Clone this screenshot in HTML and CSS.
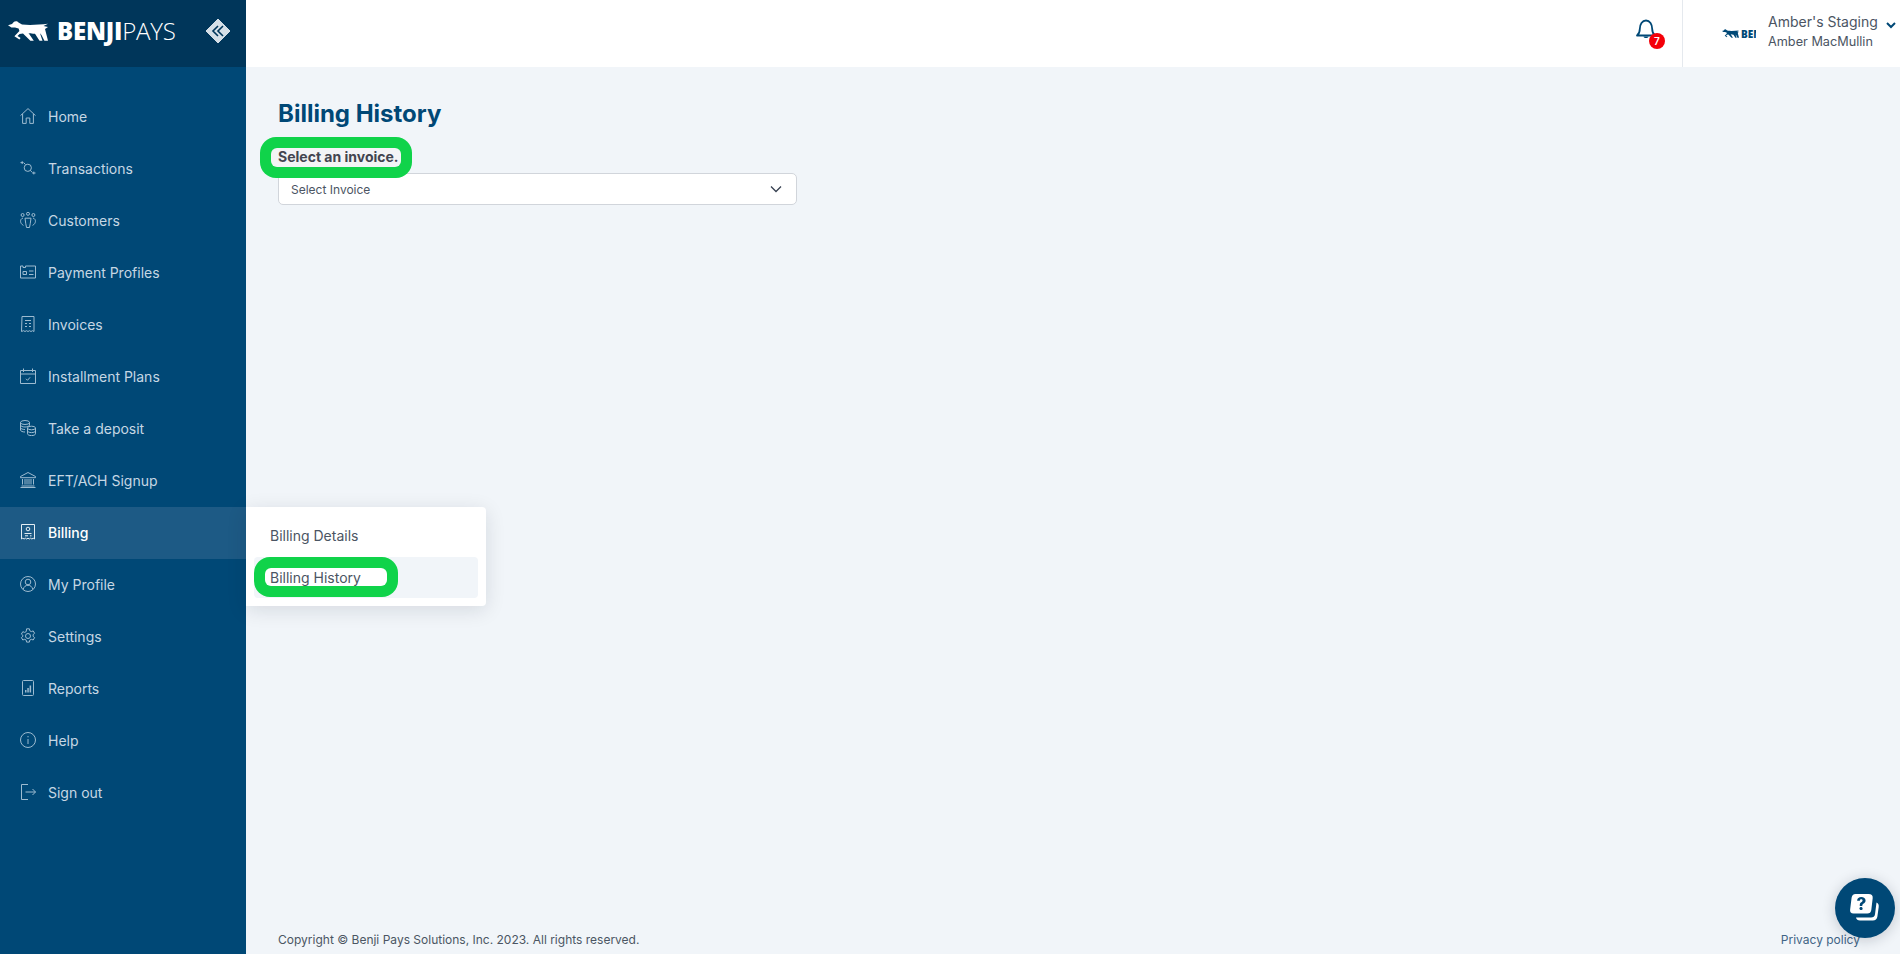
FILE: index.html
```html
<!DOCTYPE html>
<html lang="en">
<head>
    <meta charset="UTF-8">
    <meta name="viewport" content="width=device-width, initial-scale=1.0">
    <title>Billing History</title>
    <link rel="stylesheet" href="styles.css">
</head>
<body>
    <svg class="defs" width="0" height="0">
        <symbol id="dog" viewBox="0 0 40 20">
            <path d="M0 4.200 L4 3 L6 .8 C7.500 -.3 9.500 0 10.500 1.600 L14 3.600 C22 4.400 31 3.800 40 2.800 L35.500 5 L40 6 L37 8 L40 19.800 L36.400 19.800 L33.500 14 L32 12.200 L34.500 19.800 L31.500 19.800 L27 12.800 C24.500 12.800 22.500 12.600 20.500 12 L25.800 19.800 L22.400 19.800 L15 12.600 L11.600 13 L9.500 15 L12.600 17 L11.400 18.600 L6.400 15.200 L11.400 10 L10.600 7.600 L7 6.600 L3.400 6.400 Z"/>
        </symbol>
    </svg>

    <div class="app">
        <aside class="sidebar">
            <div class="brand">
                <svg class="brand-dog"><use href="#dog"/></svg>
                <span class="brand-name"><b>BENJI</b>PAYS</span>
                <svg class="collapse" width="24" height="24" viewBox="0 0 24 24">
                    <path d="M12 0 L24 12 L12 24 L0 12 Z" fill="#d5dfe7" stroke="#d5dfe7" stroke-width="1" stroke-linejoin="round"/>
                    <path d="M12 7 L7 12 L12 17 M17 7 L12 12 L17 17" fill="none" stroke="#00365a" stroke-width="1.600"/>
                </svg>
            </div>
            <nav class="nav">
                <a class="nav-item">
                    <svg class="nav-icon" viewBox="0 0 16 16"><path d="M.5 7.600 8 .6l7.500 7M2.600 6v9.400h3.600V10h3.600v5.400h3.600V6"/></svg>
                    <span>Home</span>
                </a>
                <a class="nav-item">
                    <svg class="nav-icon" viewBox="0 0 16 16"><circle cx="7.800" cy="7.800" r="3.600"/><path d="M3.500 2.600H.5M2.200 1.200v2.800M5.400 4.400 3.800 2.800M10.400 10.400l1.800 2M15.500 13h-3.300M13.800 11.600v2.800"/></svg>
                    <span>Transactions</span>
                </a>
                <a class="nav-item">
                    <svg class="nav-icon" viewBox="0 0 16 16"><circle cx="8" cy="1.800" r="1.500"/><circle cx="2.600" cy="3" r="1.500"/><circle cx="13.400" cy="3" r="1.500"/><path d="M5 6.200h6l-.7 5-.8 4.300h-3l-.8-4.300zM3 6C-.4 7-.2 11.500 3.400 13.400M13 6c3.400 1 3.200 5.500-.4 7.400"/></svg>
                    <span>Customers</span>
                </a>
                <a class="nav-item">
                    <svg class="nav-icon" viewBox="0 0 16 16"><path d="M.5 2v12h15V2h-10v1.500H3V2zM3 7.500h3.500v3H3zM9 7h4.500M9 10.500h4.500"/></svg>
                    <span>Payment Profiles</span>
                </a>
                <a class="nav-item">
                    <svg class="nav-icon" viewBox="0 0 16 16"><path d="M2 .5h12v15l-1.500-.8-1.500.8-1.500-.8-1.500.8-1.500-.8-1.500.8-1.500-.8-2 .8zM5 4.500h6M5 7.500h2M9 7.500h2M5 10.500h2M9 10.500h2"/></svg>
                    <span>Invoices</span>
                </a>
                <a class="nav-item">
                    <svg class="nav-icon" viewBox="0 0 16 16"><path d="M.5 2.500h15v13H.5zM.5 6h15M3.500.5v3.500M12.500.5v3.500M6 10.800l1.500 1.500 2.600-3"/></svg>
                    <span>Installment Plans</span>
                </a>
                <a class="nav-item">
                    <svg class="nav-icon" viewBox="0 0 16 16"><ellipse cx="5" cy="2.500" rx="4.500" ry="2"/><path d="M.5 2.500V10c0 1.200 2 2 4.500 2M.5 5c0 1.200 2 2 4.500 2s4.500-.8 4.500-2V2.500M.5 7.500c0 1.200 2 2 4.500 2"/><ellipse cx="11.500" cy="8" rx="4" ry="1.800"/><path d="M7.500 8v5.800c0 1 1.800 1.800 4 1.800s4-.8 4-1.800V8M7.500 10.800c0 1 1.800 1.800 4 1.800s4-.8 4-1.800"/></svg>
                    <span>Take a deposit</span>
                </a>
                <a class="nav-item">
                    <svg class="nav-icon" viewBox="0 0 16 16"><path d="M8 .5.5 4.500v1.200h15V4.500zM1.500 14h13M.5 15.500h15M2.500 7v5.500M5 7v5.500M7 7v5.500M9 7v5.500M11 7v5.500M13.500 7v5.500"/></svg>
                    <span>EFT/ACH Signup</span>
                </a>
                <div class="nav-item nav-item-active">
                    <svg class="nav-icon" viewBox="0 0 16 16"><path d="M1.500.5h13v14.500l-1.300-.8-1.300.8-1.300-.8-1.300.8-1.300-.8-1.300.8-1.300-.8-1.300.8-1.300-.8-1.300.8z"/><circle cx="8" cy="5" r="1.800"/><path d="M4.500 9.500h7M5 11.800h3M10 11.800h1.500"/></svg>
                    <span>Billing</span>
                    <div class="flyout">
                        <a class="flyout-item"><span class="mark-text">Billing Details</span></a>
                        <a class="flyout-item flyout-item-active">
                            <span class="mark mark-flyout"></span>
                            <span class="mark-text">Billing History</span>
                        </a>
                    </div>
                </div>
                <a class="nav-item">
                    <svg class="nav-icon" viewBox="0 0 16 16"><circle cx="8" cy="8" r="7.500"/><circle cx="8" cy="6" r="2.800"/><path d="M3.200 13.500c.6-3 2.600-4.200 4.800-4.200s4.200 1.200 4.800 4.200"/></svg>
                    <span>My Profile</span>
                </a>
                <a class="nav-item">
                    <svg class="nav-icon" viewBox="0 0 16 16"><circle cx="8" cy="8" r="2.500"/><path d="M6.600.8h2.800l.4 2 1.500.8 1.900-.7 1.400 2.400-1.500 1.300v1.700l1.500 1.300-1.400 2.400-1.900-.7-1.500.8-.4 2H6.600l-.4-2-1.500-.8-1.900.7-1.400-2.400 1.500-1.300V7.400L1.400 6.100l1.400-2.400 1.900.7 1.500-.8z"/></svg>
                    <span>Settings</span>
                </a>
                <a class="nav-item">
                    <svg class="nav-icon" viewBox="0 0 16 16"><rect x="2.500" y=".5" width="11" height="15" rx="1"/><path class="nav-icon-solid" d="M5 10h1.500v2.500H5zM7.300 8h1.500v4.500H7.300zM9.600 5.500h1.500v7H9.600z"/></svg>
                    <span>Reports</span>
                </a>
                <a class="nav-item">
                    <svg class="nav-icon" viewBox="0 0 16 16"><circle cx="8" cy="8" r="7.500"/><path d="M8 7v5M8 4v1.300"/></svg>
                    <span>Help</span>
                </a>
                <a class="nav-item">
                    <svg class="nav-icon" viewBox="0 0 16 16"><path d="M8 .5H1.500v15H8M5.500 8h10M12.500 5l3 3-3 3"/></svg>
                    <span>Sign out</span>
                </a>
            </nav>
        </aside>

        <div class="main">
            <header class="topbar">
                <div class="bell">
                    <svg width="20" height="22" viewBox="0 0 20 22">
                        <path d="M1 16.500c2-1.500 2.800-3 2.800-6.500 0-4.500 2.400-8.500 6.200-8.500s6.200 4 6.200 8.500c0 3.500.8 5 2.800 6.500z" fill="none" stroke="#004876" stroke-width="1.800" stroke-linejoin="round"/>
                        <path d="M7.500 17.500h5c-.4 2-4.600 2-5 0z" fill="#004876"/>
                    </svg>
                    <span class="badge">7</span>
                </div>
                <div class="account">
                    <div class="account-logo">
                        <svg class="account-dog"><use href="#dog"/></svg>
                        <span class="account-logo-name">BEN</span>
                    </div>
                    <div class="account-names">
                        <div class="account-org">Amber's Staging</div>
                        <div class="account-user">Amber MacMullin</div>
                    </div>
                    <svg class="account-caret" width="10" height="7" viewBox="0 0 10 7"><path d="M1 1l4 4 4-4" fill="none" stroke="#004876" stroke-width="2"/></svg>
                </div>
            </header>

            <main class="content">
                <h1 class="page-title">Billing History</h1>
                <div class="field">
                    <label class="field-label">
                        <span class="mark mark-label"></span>
                        <span class="mark-text">Select an invoice.</span>
                    </label>
                    <div class="select">
                        <span>Select Invoice</span>
                        <svg width="12" height="8" viewBox="0 0 12 8"><path d="M1 1.500l5 5 5-5" fill="none" stroke="#374151" stroke-width="1.300"/></svg>
                    </div>
                </div>
            </main>

            <footer class="footer">
                <span>Copyright © Benji Pays Solutions, Inc. 2023. All rights reserved.</span>
                <a class="footer-link">Privacy policy</a>
            </footer>
        </div>
    </div>

    <button class="chat">
        <svg width="32" height="32" viewBox="0 0 32 32">
            <path d="M27.500 10.500c1.800 1 2.500 2.300 2.200 4.500l-1.300 9.500c-.4 2.800-2 4-4.500 4H11c-2.200 0-3.700-1-4-3h15c2.300 0 3.700-1 4-3.300z" fill="#fff"/>
            <path d="M6.500 2h13C22.500 2 24 3.500 23.700 6l-1.400 12c-.3 2.400-1.700 3.500-4 3.500H4.500C2 21.500.8 20 1.100 17.800l1.500-12C2.900 3.300 4.300 2 6.500 2z" fill="#fff"/>
            <text x="12.500" y="17.500" class="chat-mark">?</text>
        </svg>
    </button>
</body>
</html>
```

FILE: styles.css
```css
* {
    box-sizing: border-box;
}

body {
    margin: 0;
    height: 100vh;
    overflow: hidden;
    font-family: Inter, "Liberation Sans", sans-serif;
    background: #f1f5f9;
    color: #374151;
}

.defs {
    position: absolute;
}

.app {
    display: flex;
    height: 100%;
}

/* sidebar */
.sidebar {
    width: 246px;
    flex-shrink: 0;
    background: #004876;
    position: relative;
    z-index: 2;
}

.brand {
    height: 67px;
    display: flex;
    align-items: center;
    padding: 0 16px 5px 8px;
    background: #00365a;
    color: white;
}

.brand-dog {
    width: 40px;
    height: 20px;
    fill: white;
    margin-right: 9px;
}

.brand-name {
    font-family: "Open Sans", sans-serif;
    font-size: 24px;
    font-weight: 300;
    line-height: 1;
    flex: 1;
    letter-spacing: -0.2px;
}

.brand-name b {
    font-weight: 800;
}

.nav {
    padding-top: 24px;
}

.nav-item {
    display: flex;
    align-items: center;
    height: 52px;
    padding: 0 0 2px 20px;
    font-size: 14px;
    color: #c6d7e4;
}

.nav-icon {
    width: 16px;
    height: 16px;
    margin-right: 12px;
    flex-shrink: 0;
    fill: none;
    stroke: #9dbbd0;
    stroke-width: 1;
}

.nav-icon-solid {
    fill: #9dbbd0;
    stroke: none;
}

.nav-item-active {
    position: relative;
    background: #1d5a85;
    color: white;
    font-weight: 500;
}

.nav-item-active .nav-icon {
    stroke: #e3edf3;
}

/* submenu that opens beside Billing */
.flyout {
    position: absolute;
    left: 100%;
    top: 0;
    width: 240px;
    height: 99px;
    padding: 8px;
    background: white;
    border-radius: 0 4px 4px 0;
    box-shadow: 0 4px 20px rgba(15, 23, 42, 0.12);
    font-weight: 400;
    color: #4b5563;
}

.flyout-item {
    display: flex;
    align-items: center;
    position: relative;
    height: 41px;
    padding-left: 16px;
    border-radius: 4px;
    font-size: 14px;
}

.flyout-item-active {
    background: #f1f5f9;
    margin-top: 1px;
}

/* green annotation rings */
.mark {
    position: absolute;
    border-radius: 6px;
    box-shadow: 0 0 0 11px #10d34a;
    pointer-events: none;
}

.mark-text {
    position: relative;
}

.mark-label {
    left: -7px;
    top: 1px;
    width: 130px;
    height: 19px;
    background: #f3f4f6;
}

.mark-flyout {
    left: 11px;
    top: 11px;
    width: 122px;
    height: 18px;
    background: white;
}

/* header */
.main {
    flex: 1;
    display: flex;
    flex-direction: column;
    min-width: 0;
}

.topbar {
    height: 67px;
    flex-shrink: 0;
    display: flex;
    justify-content: flex-end;
    background: white;
}

.bell {
    position: relative;
    padding: 19px 0 0;
    margin-right: 18px;
    width: 28px;
}

.badge {
    position: absolute;
    left: 13px;
    top: 33px;
    width: 16px;
    height: 16px;
    border-radius: 50%;
    background: #f40009;
    color: white;
    font-size: 10px;
    font-weight: 600;
    line-height: 16px;
    text-align: center;
}

.account {
    width: 218px;
    display: flex;
    align-items: center;
    padding-left: 39px;
    border-left: 1px solid #e5e9ee;
}

.account-logo {
    width: 34px;
    height: 16px;
    margin-right: 12px;
    display: flex;
    align-items: center;
    gap: 2px;
    overflow: hidden;
    flex-shrink: 0;
}

.account-dog {
    width: 17px;
    height: 9px;
    fill: #004876;
    flex-shrink: 0;
}

.account-logo-name {
    font-family: "Open Sans", sans-serif;
    font-size: 10px;
    font-weight: 800;
    color: #004876;
}

.account-names {
    flex: 1;
    color: #4b5563;
    padding-bottom: 5px;
}

.account-org {
    font-size: 14px;
    line-height: 19px;
}

.account-user {
    font-size: 12.700px;
    line-height: 19px;
    margin-top: 1px;
}

.account-caret {
    margin: 0 4px 16px 0;
}

/* page */
.content {
    flex: 1;
    padding: 29px 32px 0;
}

.page-title {
    margin: 0;
    font-size: 24px;
    line-height: 36px;
    font-weight: 700;
    color: #004876;
}

.field {
    margin-top: 15px;
    width: 519px;
}

.field-label {
    display: block;
    position: relative;
    font-size: 14px;
    font-weight: 700;
    line-height: 20px;
    color: #424550;
    margin-bottom: 6px;
}

.select {
    height: 32px;
    display: flex;
    align-items: center;
    justify-content: space-between;
    padding: 0 14px 0 12px;
    background: white;
    border: 1px solid #d1d5db;
    border-radius: 5px;
    font-size: 12px;
    color: #4b5563;
}

.footer {
    display: flex;
    justify-content: space-between;
    padding: 0 40px 6px 32px;
    font-size: 12px;
    line-height: 16px;
    color: #4b5563;
}

.footer-link {
    color: #3f6485;
}

.chat {
    position: fixed;
    right: 5px;
    bottom: 16px;
    width: 60px;
    height: 60px;
    padding: 0;
    border: none;
    border-radius: 50%;
    background: #004876;
    box-shadow: 0 2px 14px rgba(15, 23, 42, 0.2);
    display: flex;
    align-items: center;
    justify-content: center;
}

.chat-mark {
    font-family: Inter, sans-serif;
    font-size: 17px;
    font-weight: 800;
    fill: #004876;
    text-anchor: middle;
}
```
